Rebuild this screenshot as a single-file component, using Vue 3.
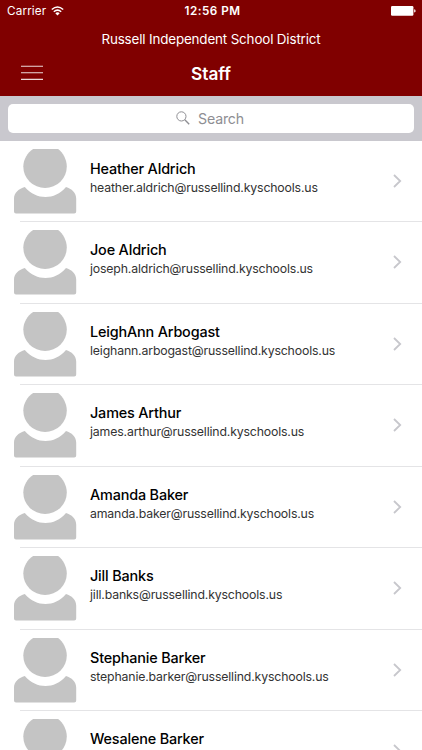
<script setup>
const staff = [
  { name: 'Heather Aldrich', email: 'heather.aldrich@russellind.kyschools.us' },
  { name: 'Joe Aldrich', email: 'joseph.aldrich@russellind.kyschools.us' },
  { name: 'LeighAnn Arbogast', email: 'leighann.arbogast@russellind.kyschools.us' },
  { name: 'James Arthur', email: 'james.arthur@russellind.kyschools.us' },
  { name: 'Amanda Baker', email: 'amanda.baker@russellind.kyschools.us' },
  { name: 'Jill Banks', email: 'jill.banks@russellind.kyschools.us' },
  { name: 'Stephanie Barker', email: 'stephanie.barker@russellind.kyschools.us' },
  { name: 'Wesalene Barker' },
]
</script>

<template>
  <div class="screen">
    <header class="header">
      <div class="status">
        <div class="carrier">
          <span>Carrier</span>
          <svg class="wifi" viewBox="0 0 13 10" width="13" height="10">
            <path d="M.8 3.5Q6.5-1.4 12.2 3.5M2.8 5.7Q6.5 2.5 10.2 5.7" fill="none" stroke="#fff" stroke-width="1.5" />
            <path d="M4.3 7.2Q6.5 5.5 8.7 7.2L6.5 9.4Z" fill="#fff" />
          </svg>
        </div>
        <span class="time">12:56 PM</span>
        <div class="power">
          <svg viewBox="0 0 25 10" width="25" height="10">
            <rect x="0" y="0" width="22.4" height="9.8" rx="1.2" fill="#fff" />
            <path d="M23.2 3.2Q24.6 3.6 24.6 4.9T23.2 6.6Z" fill="#fff" />
          </svg>
        </div>
      </div>
      <div class="district">Russell Independent School District</div>
      <div class="nav">
        <svg class="menu" viewBox="0 0 22 16" width="22" height="16">
          <path d="M0 1.2H22M0 7.7H22M0 14.4H22" stroke="#fff" stroke-opacity=".85" stroke-width="1.1" />
        </svg>
        <h1 class="title">Staff</h1>
      </div>
    </header>

    <div class="searchbar">
      <div class="field">
        <svg viewBox="0 0 14 14" width="14" height="14">
          <circle cx="5.4" cy="5.4" r="4.6" fill="none" stroke="#8e8e93" />
          <path d="M8.8 8.8L13.2 13.2" stroke="#8e8e93" stroke-width="1.4" />
        </svg>
        <span>Search</span>
      </div>
    </div>

    <ul class="list">
      <li v-for="person in staff" :key="person.name" class="row">
        <svg class="avatar" viewBox="0 0 64 66" width="64" height="66">
          <path d="M19.1 0H44.1C49 3.8 52.8 10.5 52.8 17.5A21.75 21.5 0 0 1 9.3 17.5C9.3 10.5 13.5 3.8 19.1 0Z" fill="#c4c4c4" />
          <path d="M10.8 38C17 44.8 24 48 31.5 48S46 44.8 52 38C57.5 39.5 62.2 43.8 62.2 49.5V62.5Q62.2 64.6 60.2 64.6H2Q0 64.6 0 62.5V49.5C0 43.8 5 39.5 10.8 38Z" fill="#c4c4c4" />
        </svg>
        <div class="info">
          <div class="name">{{ person.name }}</div>
          <div v-if="person.email" class="email">{{ person.email }}</div>
        </div>
        <svg class="chevron" viewBox="0 0 9 14" width="9" height="14">
          <path d="M1 1L7.2 7L1 13" fill="none" stroke="#c7c7cc" stroke-width="1.8" />
        </svg>
      </li>
    </ul>
  </div>
</template>

<style>
body {
  overflow: hidden;
}
</style>

<style scoped>
.screen {
  width: 422px;
  height: 750px;
  overflow: hidden;
  background: #fff;
  font-family: Inter, "Liberation Sans", sans-serif;
}
.header {
  height: 96px;
  background: #800000;
  color: #fff;
}
.status {
  display: grid;
  grid-template-columns: 1fr auto 1fr;
  align-items: center;
  height: 22px;
  padding: 0 6px 0 7px;
  box-sizing: border-box;
  font-size: 11.7px;
  line-height: 22px;
}
.carrier {
  display: flex;
  align-items: center;
  gap: 5px;
  letter-spacing: .15px;
}
.time {
  font-weight: 600;
  letter-spacing: .5px;
  padding-left: 2px;
}
.power {
  display: flex;
  justify-content: flex-end;
}
.district {
  height: 34px;
  line-height: 34px;
  font-size: 13.4px;
  letter-spacing: -.15px;
  text-align: center;
}
.nav {
  display: grid;
  grid-template-columns: 1fr auto 1fr;
  align-items: center;
  height: 34px;
  padding: 0 21px;
}
.menu {
  margin-bottom: 3px;
}
.title {
  margin: 0;
  font-size: 17.3px;
  line-height: 36px;
  font-weight: 600;
}
.searchbar {
  height: 45px;
  padding: 8px 8px 0;
  box-sizing: border-box;
  background: #c9c8ce;
}
.field {
  display: flex;
  align-items: center;
  justify-content: center;
  gap: 8px;
  height: 29px;
  padding: 0 2px 1px 0;
  box-sizing: border-box;
  border-radius: 5px;
  background: #fff;
  color: #8e8e93;
  font-size: 14.2px;
  letter-spacing: -.2px;
}
.list {
  margin: 0;
  padding: 0;
  list-style: none;
}
.row {
  display: flex;
  height: 81.45px;
  padding: 8px 20px 0 14px;
  box-sizing: border-box;
  background: linear-gradient(#e4e4e6, #e4e4e6) 20px 100% / 402px 1px no-repeat;
}
.avatar {
  flex: none;
}
.info {
  flex: 1;
  padding: 10px 0 0 12px;
  white-space: nowrap;
}
.name {
  font-size: 14.4px;
  line-height: 20px;
  font-weight: 500;
  letter-spacing: -.16px;
  color: #000;
}
.email {
  font-size: 12.3px;
  line-height: 17px;
  letter-spacing: -.16px;
  color: #333;
}
.chevron {
  flex: none;
  margin-top: 25px;
}
</style>
